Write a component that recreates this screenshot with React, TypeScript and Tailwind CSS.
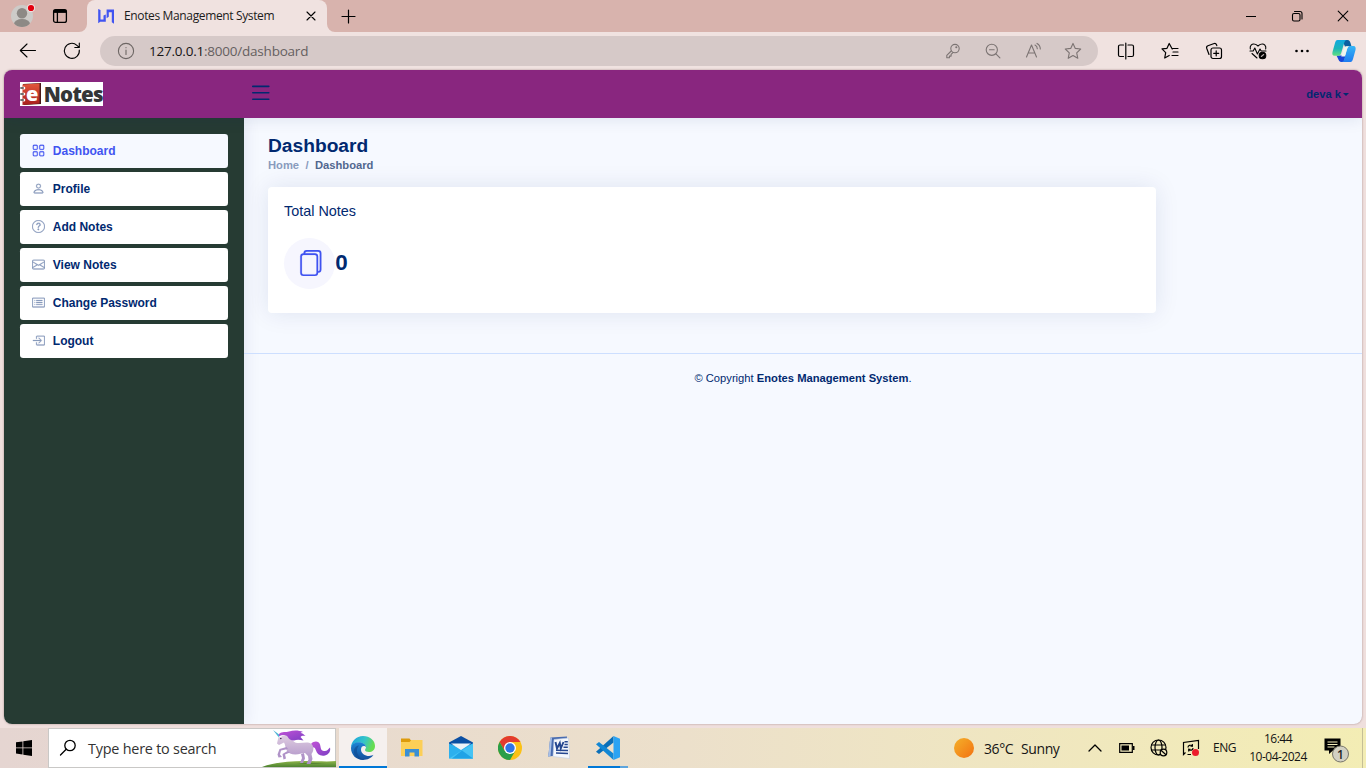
import React from 'react';
import {
  BsGrid,
  BsPerson,
  BsQuestionCircle,
  BsEnvelope,
  BsCardList,
  BsBoxArrowInRight,
  BsFiles,
  BsList,
} from 'react-icons/bs';

type Kids = { children: React.ReactNode };

const Slot = ({ children, className = '' }: Kids & { className?: string }) => (
  <div className={`flex shrink-0 items-center justify-center ${className}`}>{children}</div>
);

const Line = ({ children, size = 20, className = 'text-black', w = 1.1 }: Kids & { size?: number; className?: string; w?: number }) => (
  <svg width={size} height={size} viewBox={`0 0 ${size} ${size}`} fill="none" stroke="currentColor" strokeWidth={w} strokeLinecap="round" strokeLinejoin="round" className={`shrink-0 ${className}`}>
    {children}
  </svg>
);

const STAR = 'M10 2.4l2.3 5 5.4.6-4 3.8 1.1 5.5L10 14.6l-4.8 2.7 1.1-5.5-4-3.8 5.4-.6z';

function TabStrip() {
  return (
    <div className="flex h-8 items-end bg-[#d8b3ad]">
      <div className="flex h-8 w-[79px] items-center">
        <svg width="28" height="28" viewBox="0 0 28 28" className="ml-2">
          <clipPath id="av"><circle cx="14" cy="14" r="11" /></clipPath>
          <circle cx="14" cy="14" r="11" fill="#cdcbc8" />
          <g clipPath="url(#av)" fill="#8d8985">
            <circle cx="14" cy="11.2" r="5.2" />
            <ellipse cx="14" cy="22" rx="8" ry="5" />
          </g>
          <circle cx="23" cy="6" r="4" fill="#f0e2e0" />
          <circle cx="23" cy="6" r="3.1" fill="#e3000f" />
        </svg>
        <svg width="16" height="16" viewBox="0 0 16 16" className="ml-4" fill="none" stroke="#000" strokeWidth="1.3">
          <rect x="1.6" y="1.6" width="12.8" height="12.8" rx="2" />
          <path d="M1.6 3.3h12.8" strokeWidth="3.2" />
          <path d="M5.4 4v10.5" />
        </svg>
      </div>
      <svg width="8" height="8" viewBox="0 0 8 8"><path d="M8 0v8H0A8 8 0 0 0 8 0z" fill="#f0e2e0" /></svg>
      <div className="flex h-8 w-[240px] items-center rounded-t-lg bg-[#f0e2e0]">
        <svg width="16" height="16" viewBox="0 0 16 16" className="ml-[11px]" fill="#4154f1">
          <path d="M.2 1l2.300 1v9.500h3V7.500L7.800 6.500v7.300H2.300L.2 15.300z" />
          <path d="M8.600 1.500H16v14.200l-2.200-1.500V4.200h-3v4.500L8.600 10.200z" />
        </svg>
        <span className="ml-[10px] w-[150px] whitespace-nowrap text-[12px] tracking-[-0.36px] text-[#1b1b1b]">Enotes Management System</span>
        <Line size={10} className="ml-[32px] text-black"><path d="M1 1l8 8M9 1L1 9" /></Line>
      </div>
      <svg width="8" height="8" viewBox="0 0 8 8"><path d="M0 0v8h8A8 8 0 0 1 0 0z" fill="#f0e2e0" /></svg>
      <Slot className="h-8 w-[26px]"><Line size={15} w={1.2}><path d="M7.500 1v13M1 7.500h13" /></Line></Slot>
      <div className="ml-auto flex h-8">
        <Slot className="w-[46px]"><Line size={10}><path d="M0 5.500h10" /></Line></Slot>
        <Slot className="w-[46px]"><Line size={12}><rect x="1.500" y="3.500" width="7.500" height="7.500" rx="1.500" /><path d="M3.500 1.500H9a2 2 0 0 1 2 2V9" /></Line></Slot>
        <Slot className="w-[46px]"><Line size={12}><path d="M1.200 1.200l9.600 9.600M10.800 1.200l-9.600 9.600" /></Line></Slot>
      </div>
    </div>
  );
}

function AddressBar() {
  return (
    <div className="flex h-[38px] items-center bg-[#f0e2e0]">
      <Slot className="ml-[6px] w-11"><Line><path d="M17.500 9.500H2.500M9 3L2.300 9.500 9 16" /></Line></Slot>
      <Slot className="w-11"><Line><path d="M17.300 9a7.500 7.500 0 1 1-2.400-4.700l2 1.800M17.300 2v4.500h-4.500" /></Line></Slot>
      <div className="ml-[6px] flex h-[30px] w-[998px] items-center rounded-full bg-[#d6c9c8]">
        <Line size={18} className="ml-[17px] text-[#6d6664]"><circle cx="9" cy="9" r="7.600" /><path d="M9 8v4.500M9 5.500v.3" /></Line>
        <span className="ml-[14px] whitespace-nowrap text-[13.500px] tracking-[-0.22px] text-[#65605f]"><span className="text-[#161414]">127.0.0.1</span>:8000/dashboard</span>
        <div className="ml-auto mr-[5px] flex text-[#7c7473]">
          <Slot className="w-10"><Line size={16} className=""><circle cx="10" cy="5.600" r="4.200" /><path d="M6.200 8L1.800 12.300v2.400h2.600v-1.600h1.700v-1.700l1.800-1.800" /><circle cx="11.300" cy="4.300" r=".5" /></Line></Slot>
          <Slot className="w-10"><Line size={16} className=""><circle cx="6.800" cy="6.800" r="5.600" /><path d="M4.500 6.800h4.700M10.900 10.900l4 4" /></Line></Slot>
          <Slot className="w-10"><Line size={18} className=""><path d="M2.500 15L7.500 3l5 12M4.200 11h6.600M11 3c1.500.8 2.300 2 2.300 3.800M13 1.400c2.200 1.200 3.300 3 3.300 5.600" /></Line></Slot>
          <Slot className="w-10"><Line className=""><path d={STAR} /></Line></Slot>
        </div>
      </div>
      <div className="ml-[6px] flex">
        <Slot className="w-11"><Line size={18} w={1.2}><path d="M6.500 3H3a1.500 1.500 0 0 0-1.500 1.500v8.500A1.500 1.500 0 0 0 3 14.500h3.500M11 3h4a1.500 1.500 0 0 1 1.500 1.500v8.500a1.500 1.500 0 0 1-1.500 1.500h-4M8.800 1v16" /></Line></Slot>
        <Slot className="w-11"><Line size={18} w={1.2}><path d="M11.200 7L8.200 1.500 6 6.300l-5 .6 3.700 3.700-1 5.400 4.500-2.500M11 6.500h6M12 10h5M11 13.500h6" /></Line></Slot>
        <Slot className="w-11"><Line size={18} w={1.2}><rect x="6" y="6" width="10.500" height="10.500" rx="2" /><path d="M11.200 8.800v5M8.700 11.300h5M4 12.500L1.700 6.300a2 2 0 0 1 1.200-2.500L9.200 1.500a2 2 0 0 1 2.300 1.200l.3 1" /></Line></Slot>
        <Slot className="w-11"><Line size={18}><path d="M1.300 7C.5 3.500 3 1.700 5.200 2 7 2.200 8 3 9 4c1-1 2-1.800 3.800-2 2.200-.3 4.700 1.500 3.900 5M1 9h3.200l1.600-3 2.600 6 2.600-5 1.200 2H17M3 11.500l5 4.500" /><circle cx="13.500" cy="13.500" r="3.300" fill="#000" /><path d="M12.300 14.500l2.400-2" stroke="#b9aeac" /></Line></Slot>
        <Slot className="w-11"><svg width="16" height="4" viewBox="0 0 16 4"><circle cx="2.500" cy="2" r="1.300" /><circle cx="8" cy="2" r="1.300" /><circle cx="13.500" cy="2" r="1.300" /></svg></Slot>
        <Slot className="w-10">
          <svg width="24" height="22" viewBox="0 0 24 22">
            <defs>
              <linearGradient id="cp1" x1="0" y1="0" x2="0" y2="1"><stop stopColor="#10a8e0" /><stop offset=".55" stopColor="#1bb5b8" /><stop offset="1" stopColor="#63e080" /></linearGradient>
              <linearGradient id="cp2" x1="0" y1="0" x2="0" y2="1"><stop stopColor="#36b5f5" /><stop offset="1" stopColor="#1f7cf0" /></linearGradient>
            </defs>
            <path d="M10 0h5.500c2 0 2.500 1.500 3 3l1 3.500H13z" fill="#0a5fa0" />
            <path d="M4.500 15.500h9L12 22H9.500c-2 0-2.800-1.500-3.300-3z" fill="#1746d8" />
            <path d="M5.500 0H15c-2 0-2.500 2-3.200 4.200L9.500 12c-.6 2-1.200 3.800-3 3.800H2.500C.5 15.800 0 14 .5 12L3 3C3.600 1 4.200 0 5.500 0z" fill="url(#cp1)" />
            <path d="M18.500 22H9.500c2 0 2.500-2 3.200-4.200L15 9.500c.6-2 1.200-3.500 3-3.500h3.500c2 0 2.500 2 2 4L21 19c-.6 2-1.200 3-2.500 3z" fill="url(#cp2)" />
            <path d="M14.500 6.200h3C16 6.500 15.300 8 14.800 9.500l-2 7H9.300L12 7.500z" fill="#eef6ee" />
          </svg>
        </Slot>
      </div>
    </div>
  );
}

function Logo() {
  return (
    <div className="flex h-6 w-[83px] items-center bg-white">
      <svg width="22" height="24" viewBox="0 0 22 24" className="shrink-0">
        <defs><linearGradient id="bk" x1="0" y1="0" x2="0" y2="1"><stop stopColor="#e2573c" /><stop offset="1" stopColor="#a81f1c" /></linearGradient></defs>
        <path d="M3 2l18-1v21L4 23z" fill="#4a1a18" />
        <path d="M2.500 2.500L19.500 1.500V21.500L2.500 23z" fill="url(#bk)" />
        {[6, 12, 18].map((y) => (
          <g key={y}><circle cx="3.800" cy={y} r="1.500" fill="#fff" /><path d={`M.3 ${y}h3.500`} stroke="#444" strokeWidth="1.300" /></g>
        ))}
      </svg>
      <span className="-ml-[16px] font-['Open_Sans',sans-serif] text-[20px] font-extrabold leading-6 text-white">e</span>
      <span className="ml-auto whitespace-nowrap font-['Open_Sans',sans-serif] text-[20.500px] font-extrabold leading-6 tracking-[-0.700px] text-[#343536]">Notes</span>
    </div>
  );
}

const NAV = [
  { label: 'Dashboard', Icon: BsGrid, active: true },
  { label: 'Profile', Icon: BsPerson },
  { label: 'Add Notes', Icon: BsQuestionCircle },
  { label: 'View Notes', Icon: BsEnvelope },
  { label: 'Change Password', Icon: BsCardList },
  { label: 'Logout', Icon: BsBoxArrowInRight },
];

function WebPage() {
  return (
    <div className="mx-1 flex h-[654px] flex-col overflow-hidden rounded-lg bg-[#f6f9ff] font-['Liberation_Sans',Arial,sans-serif] text-[#012970] shadow-[0_0_2px_rgba(80,40,40,0.5)]">
      <header className="z-10 flex h-12 shrink-0 items-center bg-[#89267f] pl-4 shadow-[0_1.600px_16px_rgba(1,41,112,0.1)]">
        <Logo />
        <BsList className="-mt-[2px] ml-[145px] size-[25.600px]" />
        <span className="ml-auto text-[11.200px] font-bold">deva k</span>
        <span className="ml-[2px] mr-[13px] border-x-[3.400px] border-t-[3.400px] border-x-transparent border-t-[#012970]" />
      </header>
      <div className="flex grow">
        <aside className="w-60 shrink-0 bg-[#263b33] p-4 shadow-[0_0_16px_rgba(1,41,112,0.1)]">
          <ul className="flex flex-col gap-1">
            {NAV.map(({ label, Icon, active }) => (
              <li key={label} className={`flex h-[34px] items-center rounded-[3.200px] pl-3 text-[12px] font-bold ${active ? 'bg-[#f6f9ff] text-[#4154f1]' : 'bg-white'}`}>
                <Icon className={`-ml-[0.500px] -mt-px mr-[8.300px] size-[13px] stroke-[0.300] ${active ? 'text-[#4154f1]' : 'text-[#899bbd]'}`} />
                {label}
              </li>
            ))}
          </ul>
        </aside>
        <div className="flex grow flex-col">
          <main className="px-6 pt-4">
            <h1 className="text-[19.200px] font-bold leading-[23px]">Dashboard</h1>
            <p className="flex gap-[6.400px] text-[11.200px] font-bold leading-[17px] text-[#899bbd]">
              <span>Home</span><span>/</span><span className="text-[#51678f]">Dashboard</span>
            </p>
            <section className="mt-[13px] h-[126px] w-[888px] rounded-[4px] bg-white px-4 pt-4 shadow-[0_0_24px_rgba(1,41,112,0.1)]">
              <h5 className="text-[14.400px] leading-[17px]">Total Notes</h5>
              <div className="mt-[18px] flex items-center">
                <div className="flex size-[51.200px] items-center justify-center rounded-full bg-[#f6f6fe] text-[#4154f1]">
                  <BsFiles className="-mt-px size-[26px] stroke-[0.100]" />
                </div>
                <span className="-mt-[2px] text-[22.400px] font-bold">0</span>
              </div>
            </section>
          </main>
          <footer className="mt-10 border-t border-[#cddfff] pt-4 text-center text-[11.200px] leading-[17px]">
            © Copyright <b>Enotes Management System</b>.
          </footer>
        </div>
      </div>
    </div>
  );
}

const Unicorn = () => (
  <svg width="76" height="38" viewBox="0 0 76 38" className="shrink-0">
    <defs>
      <linearGradient id="hill" x1="0" y1="0" x2="0" y2="1"><stop stopColor="#8eb449" /><stop offset="1" stopColor="#4c8330" /></linearGradient>
      <linearGradient id="uni" x1="0" y1="0" x2="0" y2="1"><stop stopColor="#e0cfe2" /><stop offset="1" stopColor="#a98bc4" /></linearGradient>
      <linearGradient id="mane" x1="0" y1="0" x2="1" y2="1"><stop stopColor="#c152d6" /><stop offset="1" stopColor="#7d3fc4" /></linearGradient>
    </defs>
    <path d="M2 38c10-4 26-6 42-6 12 0 24 1 32 0v6z" fill="url(#hill)" />
    <path d="M36 35c6-1.500 20-1.500 30 0z" fill="#456f2b" opacity=".6" />
    <path d="M13 1l7.500 5.500-2 1.500z" fill="#4fb4d6" />
    <path d="M51 15c3-3.500 8-3 9 .5 1 3.500.5 6 4 6.500 3 .4 4-1.500 6-3.500 1 4-1.500 7-5 8-5 1-8-1.500-9-5-.8-3-2-4-5-3z" fill="url(#mane)" />
    <path d="M18.500 8L17 14.500l2 1.500 5-2.500c1.500 2 1 5 2.500 7.500 1.500 3 5 4.500 9 4.500 4 0 7-2 9.500-1.500l3 3 .5 3.500-2 4.500h4l2-5-1-5c2.500-3 2.500-7.500 0-10-4-3-9-.5-14-1-5-.5-6-5-9-7.500-2-1.500-5-1-8 2z" fill="url(#uni)" />
    <path d="M30 23.500l-5 2 1 4-2.500 1-1-5.500 5-3zM28 20l-7 1.500-1 4 2 2.500-3.500.5-1-3 2-5.500 7-2zM44 24l1 5.500-2 4.500h-3l2-5-1-4z" fill="#b093c8" />
    <path d="M19 5c3-3 7-1.500 10-2.500 4-1.500 10-1.500 14 .5-2 .3-2.500 1-2.500 1 2 0 3.500 1.500 5 3-3-.5-4 0-5 1l3 3.500c-4-1-7-1-9.500 0-3.500 0-5-1.500-6.500-4C25.500 5.500 23 5.500 19 7z" fill="url(#mane)" />
    <circle cx="20.800" cy="9.500" r=".8" fill="#3c2050" />
  </svg>
);

const Edge = () => (
  <svg width="24" height="24" viewBox="0 0 24 24">
    <defs>
      <linearGradient id="e1" x1="0" y1="0" x2="1" y2=".3"><stop stopColor="#1a9fe0" /><stop offset=".6" stopColor="#35c5c8" /><stop offset="1" stopColor="#66dd50" /></linearGradient>
      <linearGradient id="e2" x1="0" y1="0" x2="0" y2="1"><stop stopColor="#1c85d6" /><stop offset="1" stopColor="#124f9b" /></linearGradient>
    </defs>
    <path d="M0 12C0 5 5.500 0 12 0c7 0 12 4.500 12 10 0 4-3 6-6 6-2.500 0-4-1-4-2 0-.8 1-1.200 1-3 0-2-3-4.500-6.500-4.500C4 6.500.5 9 0 12z" fill="url(#e1)" />
    <path d="M0 12c.3-3.500 3.500-5.800 8-5.800 4 0 7 2.500 7 4.800-1-1.500-5-2-5 2.500 0 4 4 6.500 8 6.500 2 0 3.500-.6 4.500-1.200C20.500 22 16.500 24 12 24 5.500 24 0 19 0 12z" fill="url(#e2)" />
    <path d="M8 9.500c-4 4-2 12 5 14.400C6 24 2 18 3 14c.5-2.500 3-4.500 5-4.500z" fill="#0d4a8f" opacity=".6" />
  </svg>
);

const TASKS: { name: string; icon: React.ReactNode }[] = [
  {
    name: 'files',
    icon: (
      <svg width="22" height="20" viewBox="0 0 22 20"><path d="M0 2h21.500v16H0z" fill="#fccf57" /><path d="M0 .5h8.500l1.500 2-1.500 1.500H0z" fill="#dd9b0c" /><path d="M4 11h14v7.500h-4.500v-4h-5v4H4z" fill="#3a8fd4" /></svg>
    ),
  },
  {
    name: 'mail',
    icon: (
      <svg width="24" height="23" viewBox="0 0 24 23" className="-mt-px"><path d="M0 6.500L12 0l12 6.500v3H0z" fill="#0b4fa3" /><path d="M0 7.500l5.500 2.300L12 13.500l6-3.700 6-2.300v15H0z" fill="#2cb0ee" /><path d="M2 7.500h20L12 14z" fill="#eef3f8" /><path d="M0 22.500L24 7.500v15z" fill="#45c3f4" /><path d="M24 22.500H3L13 14.500z" fill="#1fa3e6" /></svg>
    ),
  },
  {
    name: 'chrome',
    icon: (
      <svg width="24" height="24" viewBox="0 0 24 24"><circle cx="12" cy="12" r="12" fill="#fbc116" /><path d="M1.600 6A12 12 0 0 1 22.400 6H12L6.800 15z" fill="#e33b2e" /><path d="M1.600 6A12 12 0 0 0 12 24l5.200-9H6.800z" fill="#2a9e49" /><circle cx="12" cy="12" r="6" fill="#fff" /><circle cx="12" cy="12" r="4.700" fill="#2f74e6" /></svg>
    ),
  },
  {
    name: 'word',
    icon: (
      <svg width="24" height="24" viewBox="0 0 24 24" fill="none">
        <path d="M3.500 1.500L20 .5v18L1 20.500C2.500 14 2 8 3.500 1.500z" fill="#486bb0" />
        <path d="M1 20.500C2.500 14 2 7 3.500 1.500L5 1.400 3.500 20.300z" fill="#a9c0e6" />
        <path d="M7 3.500l14.500-1.500 1 20.500L6 20.500z" fill="#f4f7fc" stroke="#c0cce2" strokeWidth=".6" />
        <path d="M8.500 6l1.500 6.500 2.800-5.500 1 5.500 2.700-6.500" stroke="#24468f" strokeWidth="1.900" />
        <path d="M17.500 5.800h3.300M17.500 8.500h3.300M16.500 11.200h4.300M9 14.200l12 .3M9 17l12 .5" stroke="#24468f" strokeWidth="1.500" />
      </svg>
    ),
  },
];

const VsCode = () => (
  <svg width="24" height="24" viewBox="0 0 24 24"><path d="M17.500 0v6.500L3 18 0 15.700z" fill="#0b6fb8" /><path d="M0 8.300L3 6l14.500 11.500V24z" fill="#1287d4" /><path d="M17.500 0L24 2.800v18.400L17.500 24z" fill="#2ba3f3" /></svg>
);

function Taskbar() {
  return (
    <div className="mt-1 flex h-10 items-center bg-linear-to-r from-[#e5d5d1] via-[#ece0cb] to-[#f3edb4] text-[#141414]">
      <Slot className="w-12">
        <svg width="16" height="16" viewBox="0 0 16 16"><path d="M0 2.300l6.500-.9v6.100H0zM7.300 1.300L16 0v7.500H7.300zM0 8.300h6.500v6.200L0 13.600zM7.300 8.300H16V16l-8.700-1.300z" /></svg>
      </Slot>
      <div className="flex h-10 w-[288px] items-center border border-[#c9c8c6] bg-white">
        <Line size={18} className="ml-[10px] text-black" w={1.300}><circle cx="11" cy="6.500" r="5.200" /><path d="M7.200 10.300L1.500 16" /></Line>
        <span className="ml-[11px] mt-px w-[134px] whitespace-nowrap text-[14.400px] tracking-[-0.220px] text-[#333]">Type here to search</span>
        <div className="-mr-px ml-auto"><Unicorn /></div>
      </div>
      <Slot className="ml-[3px] h-10 w-12 border-b-2 border-[#0078d7] bg-[#f5f0ee] pt-[2px]"><Edge /></Slot>
      {TASKS.map((t) => <Slot key={t.name} className="h-10 w-[49px]">{t.icon}</Slot>)}
      <div className="flex h-10 w-[49px] flex-col items-center justify-between">
        <div className="pt-2"><VsCode /></div>
        <div className="flex h-[2px] w-10"><i className="w-8 bg-[#0078d7]" /><i className="w-2 bg-[#5ea5dd]" /></div>
      </div>
      <div className="ml-auto flex h-10 items-center">
        <span className="size-5 rounded-full bg-linear-to-br from-[#f3b02a] to-[#f2700f]" />
        <span className="ml-[10px] w-[30px] whitespace-nowrap text-[14px] tracking-[-0.400px]">36°C</span>
        <span className="ml-[7px] w-[39px] whitespace-nowrap text-[14px] tracking-[-0.400px]">Sunny</span>
        <Line size={14} className="ml-[28px] text-black" w={1.300}><path d="M1 10l6-6 6 6" /></Line>
        <svg width="16" height="10" viewBox="0 0 16 10" className="ml-[17px]"><path d="M.7.700h12.600v8.600H.7z" fill="none" stroke="#000" strokeWidth="1.200" /><path d="M2.500 2.500h7.500v5H2.500zM14 3h1.500v4H14z" /></svg>
        <Line size={18} className="ml-[15px] text-black" w={1.200}><circle cx="8.500" cy="8.500" r="7.500" /><ellipse cx="8.500" cy="8.500" rx="3.500" ry="7.500" /><path d="M1.500 6h14M1.500 11h14" /><circle cx="13.500" cy="13.500" r="3.300" fill="#f0e7be" /><path d="M11.300 11.500l4.400 4" /></Line>
        <svg width="18" height="18" viewBox="0 0 18 18" className="ml-[14px]" fill="none" stroke="#000" strokeWidth="1.200"><path d="M9 15.500H5.500M3.500 13.500l-2 2V3.500L16.500 1.500V10M6 8.500c0-2 2.500-3 4.300-1.500V5M10.300 7.200H8.500M11 9c0 2-2.500 3-4.300 1.500v2M6.700 10.300h1.800" /><circle cx="13.500" cy="13.500" r="3.500" fill="#ec1c2c" stroke="none" /></svg>
        <span className="ml-[13px] w-[23px] whitespace-nowrap text-[12px] tracking-[-0.500px]">ENG</span>
        <div className="ml-[13px] w-[58px] whitespace-nowrap text-center text-[12px] leading-[18px] tracking-[-0.500px]"><div>16:44</div><div>10-04-2024</div></div>
        <svg width="26" height="26" viewBox="0 0 26 26" className="ml-[17px] mt-1">
          <path d="M.5 1.500h16v12H9l-4 3.500v-3.500H.5z" />
          <path d="M3.500 5h10M3.500 7.500h10M3.500 10h7" stroke="#f2ecba" strokeWidth="1" />
          <circle cx="16.500" cy="17" r="8" fill="#d2d0c2" stroke="#77756a" />
          <text x="16.500" y="21.500" fontSize="12" fontWeight="600" textAnchor="middle" fill="#222">1</text>
        </svg>
        <span className="ml-[12px] mr-[3px] h-10 w-px bg-[#c5bf97]" />
      </div>
    </div>
  );
}

export default function App() {
  return (
    <div className="h-[768px] w-[1366px] overflow-hidden bg-[#efdfdd] font-['Open_Sans','Noto_Sans',sans-serif]">
      <TabStrip />
      <AddressBar />
      <WebPage />
      <Taskbar />
    </div>
  );
}
